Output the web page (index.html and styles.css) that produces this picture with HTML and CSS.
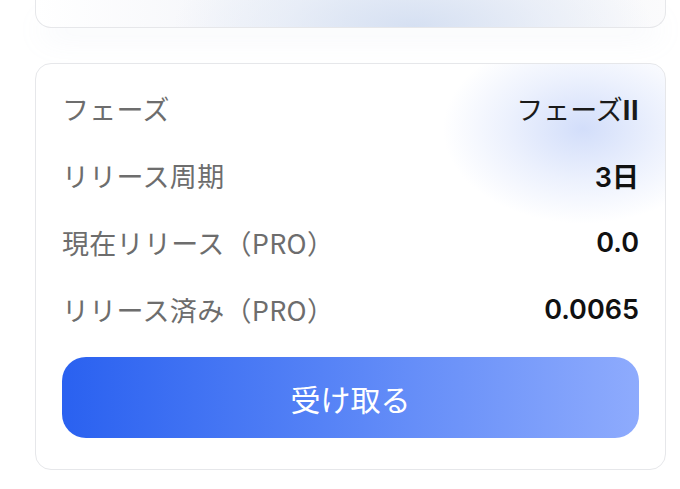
FILE: index.html
```html
<!DOCTYPE html>
<html lang="ja">
<head>
<meta charset="utf-8">
<link rel="stylesheet" href="styles.css">
</head>
<body>
<div class="page">
  <div class="card card-top"></div>
  <div class="card card-main">
    <div class="glow"></div>
    <div class="rows">
      <div class="row"><span class="label">フェーズ</span><span class="value value-plain">フェーズ<span class="roman">II</span></span></div>
      <div class="row"><span class="label">リリース周期</span><span class="value">3日</span></div>
      <div class="row"><span class="label">現在リリース（PRO）</span><span class="value">0.0</span></div>
      <div class="row"><span class="label">リリース済み（PRO）</span><span class="value">0.0065</span></div>
    </div>
    <button class="claim">受け取る</button>
  </div>
</div>
</body>
</html>
```
FILE: styles.css
```css
html, body {
  margin: 0;
  padding: 0;
  background: #ffffff;
}
body {
  font-family: "Noto Sans CJK JP", "Noto Sans", sans-serif;
  width: 680px;
  height: 489px;
  overflow: hidden;
}
.page {
  display: flex;
  flex-direction: column;
  gap: 35px;
  padding: 0 14px 0 35px;
}
.card {
  box-sizing: border-box;
  border: 1.5px solid #e6e7ea;
  border-radius: 16px;
  background: #ffffff;
}
.card-top {
  height: 28px;
  border-top: none;
  border-radius: 0 0 16px 16px;
  background:
    radial-gradient(ellipse 240px 90px at 60% 100%, rgba(212, 223, 242, 0.95), rgba(226, 233, 246, 0.6) 55%, rgba(255,255,255,0) 100%),
    linear-gradient(90deg, #ffffff 0%, #f7f8fb 25%, #eef2f8 50%, #f3f5f9 75%, #fbfbfc 100%);
  box-shadow: 0 16px 30px -8px rgba(170, 185, 215, 0.16);
}
.card-main {
  position: relative;
  height: 407px;
  padding: 11px 26px 31px 26px;
  display: flex;
  flex-direction: column;
  overflow: hidden;
}
.glow {
  position: absolute;
  right: -30px;
  top: -40px;
  width: 280px;
  height: 210px;
  background: radial-gradient(ellipse 50% 45% at 60% 50%, rgba(208, 220, 250, 0.95), rgba(224, 232, 252, 0.6) 55%, rgba(255,255,255,0) 100%);
  pointer-events: none;
}
.rows {
  position: relative;
  display: flex;
  flex-direction: column;
}
.row {
  height: 67px;
  display: flex;
  align-items: center;
  justify-content: space-between;
}
.label {
  font-size: 27px;
  color: #6d6d6d;
  font-weight: 400;
  letter-spacing: 0.3px;
}
.value {
  font-family: "Inter", "Noto Sans CJK JP", sans-serif;
  font-size: 27px;
  font-weight: 600;
  color: #111111;
}
.value-plain {
  font-family: "Noto Sans CJK JP", sans-serif;
  font-weight: 400;
  color: #1a1a1a;
}
.roman {
  font-family: "Inter", sans-serif;
  font-weight: 700;
  letter-spacing: 0.5px;
}
.claim {
  margin-top: 14px;
  height: 81px;
  border: none;
  border-radius: 24px;
  background: linear-gradient(90deg, #2a61f0 0%, #5582f6 45%, #8eabfd 100%);
  color: #ffffff;
  font-family: "Noto Sans CJK JP", sans-serif;
  font-size: 30px;
  font-weight: 400;
  padding: 0;
}
```
